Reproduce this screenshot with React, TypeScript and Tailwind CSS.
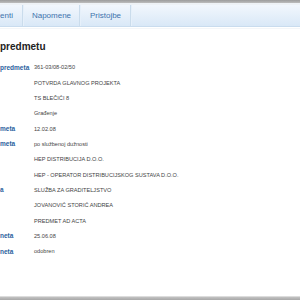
import React from "react";

const rows: [string, string][] = [
  ["predmeta", "361-03/08-02/50"],
  ["", "POTVRDA GLAVNOG PROJEKTA"],
  ["", "TS BLEČIĆI 8"],
  ["", "Građenje"],
  ["meta", "12.02.08"],
  ["meta", "po službenoj dužnosti"],
  ["", "HEP DISTRIBUCIJA D.O.O."],
  ["", "HEP - OPERATOR DISTRIBUCIJSKOG SUSTAVA D.O.O."],
  ["a", "SLUŽBA ZA GRADITELJSTVO"],
  ["", "JOVANOVIĆ STORIĆ ANDREA"],
  ["", "PREDMET AD ACTA"],
  ["neta", "25.06.08"],
  ["neta", "odobren"],
];

export default function App() {
  return (
    <div
      className="w-[300px] h-[300px] bg-white flex flex-col overflow-hidden"
      style={{ fontFamily: '"Liberation Sans", Arial, sans-serif' }}
    >
      <div className="h-[3px] bg-gradient-to-b from-[#9c9c9c] to-[#bdbdbd]" />
      <div className="h-[2px] bg-[#eef2f6]" />
      <div className="h-[22px] flex bg-gradient-to-b from-[#f2f7fd] to-[#d9e8f7] border-b border-[#c9dcee]">
        <div className="w-[23px] flex items-center justify-end pr-[9px] border-r border-[#cadcec] text-[8px] text-[#3f73ad]">
          enti
        </div>
        <div className="w-[57px] flex items-center justify-center border-l border-r border-[#e6f0fa] border-r-[#cadcec] text-[8px] text-[#3f73ad]">
          Napomene
        </div>
        <div className="w-[51px] flex items-center justify-center border-l border-[#e6f0fa] border-r border-r-[#cadcec] text-[8px] text-[#3f73ad]">
          Pristojbe
        </div>
        <div className="flex-1 border-l border-[#e6f0fa]" />
      </div>
      <div className="h-[1px] mt-[1px] bg-[#f3f6f9]" />
      <div className="pt-[12px] text-[10px] font-bold text-[#222] leading-[12px]">predmetu</div>
      <div className="mt-[7px] flex flex-col">
        {rows.map(([l, v], i) => (
          <div key={i} className="h-[15.33px] flex items-center">
            <div className="w-[34px] text-[6.5px] font-bold text-[#2c5f9e] whitespace-nowrap">{l}</div>
            <div className="text-[5.6px] text-[#444] whitespace-nowrap">{v}</div>
          </div>
        ))}
      </div>
      <div className="flex-1" />
      <div className="h-[1px] bg-[#dcdcdc]" />
      <div className="h-[3px] bg-gradient-to-b from-[#c2c2c2] to-[#a8a8a8]" />
    </div>
  );
}
